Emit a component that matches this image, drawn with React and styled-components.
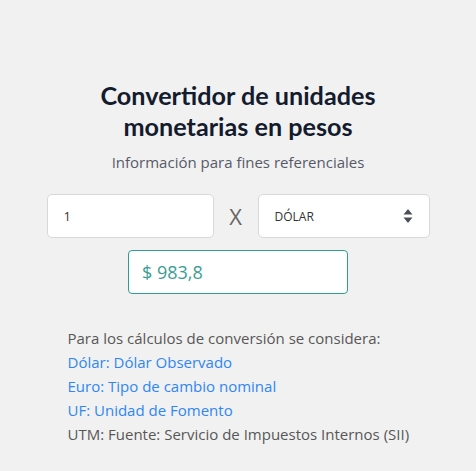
import React, { useState } from "react";
import styled, { createGlobalStyle } from "styled-components";

const GlobalStyle = createGlobalStyle`
  body {
    margin: 0;
    background: #f1f1f1;
    font-family: "Open Sans", "Liberation Sans", sans-serif;
  }
`;

const RATES = { DOLAR: 983.8, EURO: 1061.2, UF: 37000, UTM: 64000 };

function App() {
  const [amount, setAmount] = useState("1");
  const [unit, setUnit] = useState("DOLAR");

  const total = (Number(amount) || 0) * RATES[unit];
  const formatted = total.toLocaleString("es-CL", { maximumFractionDigits: 1 });

  return (
    <>
      <GlobalStyle />
      <Page>
        <Title>Convertidor de unidades monetarias en pesos</Title>
        <Subtitle>Información para fines referenciales</Subtitle>

        <Row>
          <NumberInput
            type="text"
            value={amount}
            onChange={(e) => setAmount(e.target.value)}
          />
          <Times>X</Times>
          <SelectWrap>
            <Select value={unit} onChange={(e) => setUnit(e.target.value)}>
              <option value="DOLAR">DÓLAR</option>
              <option value="EURO">EURO</option>
              <option value="UF">UF</option>
              <option value="UTM">UTM</option>
            </Select>
            <Arrows viewBox="0 0 10 16">
              <path d="M5 1 L9.5 6.5 H0.5 Z" fill="#4a4f57" />
              <path d="M5 15 L9.5 9.5 H0.5 Z" fill="#4a4f57" />
            </Arrows>
          </SelectWrap>
        </Row>

        <Result>$ {formatted}</Result>

        <Notes>
          <Note>Para los cálculos de conversión se considera:</Note>
          <Note $link>Dólar: Dólar Observado</Note>
          <Note $link>Euro: Tipo de cambio nominal</Note>
          <Note $link>UF: Unidad de Fomento</Note>
          <Note>UTM: Fuente: Servicio de Impuestos Internos (SII)</Note>
        </Notes>
      </Page>
    </>
  );
}

const Page = styled.main`
  width: 383px;
  margin: 0 auto;
  padding-top: 80px;
  display: flex;
  flex-direction: column;
  align-items: center;
`;

const Title = styled.h1`
  font-family: Lato, "Liberation Sans", sans-serif;
  font-weight: 700;
  font-size: 25.2px;
  line-height: 31px;
  color: #141b2d;
  text-align: center;
  width: 300px;
  margin: 0;
`;

const Subtitle = styled.p`
  font-size: 15px;
  color: #565a68;
  margin: 10px 0 0;
`;

const Row = styled.div`
  display: flex;
  align-items: center;
  width: 100%;
  margin-top: 22px;
`;

const Field = `
  box-sizing: border-box;
  height: 44px;
  background: #fff;
  border: 1px solid #d6d8dc;
  border-radius: 5px;
  font-family: "Open Sans", "Liberation Sans", sans-serif;
  color: #333;
  outline: none;
`;

const NumberInput = styled.input`
  ${Field}
  width: 167px;
  padding: 0 16px;
  font-size: 13px;
`;

const Times = styled.span`
  width: 44px;
  text-align: center;
  font-size: 22px;
  color: #666;
`;

const SelectWrap = styled.div`
  position: relative;
  flex: 1;
`;

const Select = styled.select`
  ${Field}
  width: 100%;
  padding: 0 16px;
  font-size: 12px;
  appearance: none;
  -webkit-appearance: none;
`;

const Arrows = styled.svg`
  position: absolute;
  right: 17px;
  top: 14px;
  width: 10px;
  height: 16px;
  pointer-events: none;
`;

const Result = styled.div`
  box-sizing: border-box;
  width: 220px;
  height: 44px;
  margin-top: 12px;
  padding: 0 13px;
  display: flex;
  align-items: center;
  background: #fff;
  border: 1px solid #2e9c8f;
  border-radius: 4px;
  font-size: 18px;
  color: #3a9e94;
`;

const Notes = styled.div`
  align-self: stretch;
  margin-top: 32px;
  padding-left: 21px;
`;

const Note = styled.p`
  margin: 0;
  font-size: 15px;
  line-height: 24px;
  color: ${(p) => (p.$link ? "#2f86f5" : "#575757")};
`;

export default App;
